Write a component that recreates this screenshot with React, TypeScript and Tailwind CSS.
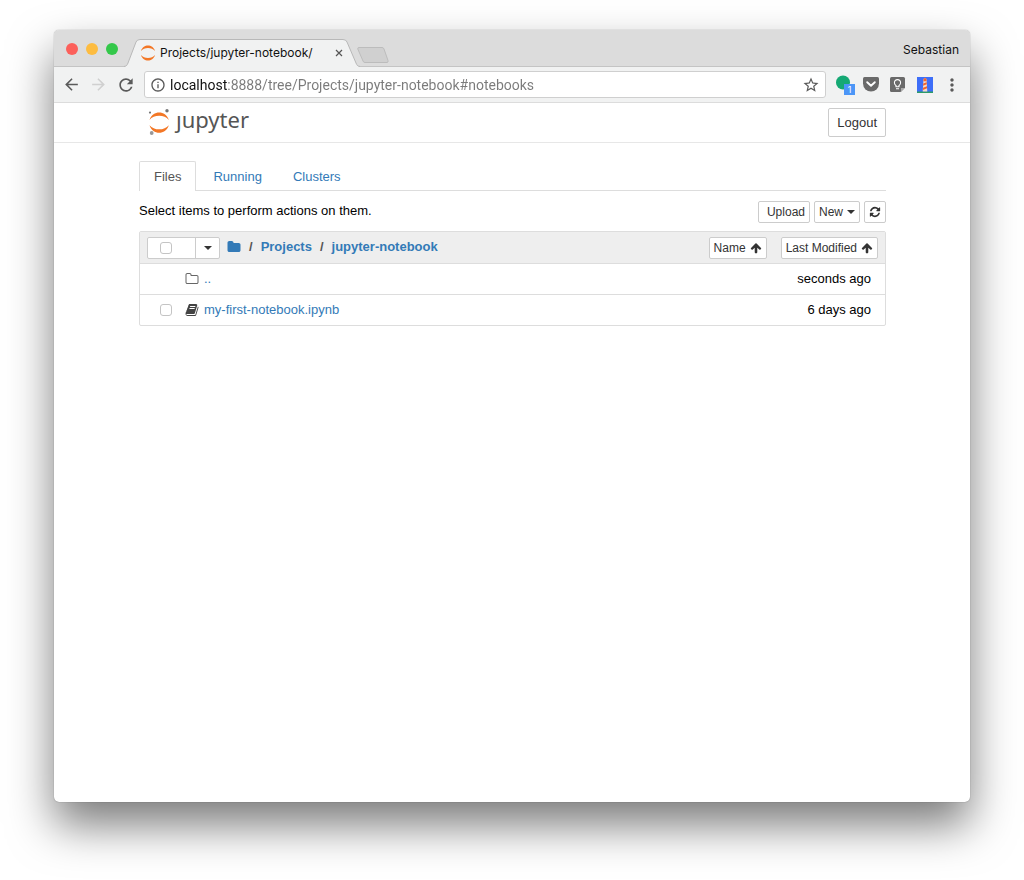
import type { ReactNode } from "react";
import {
  MdArrowBack,
  MdArrowForward,
  MdInfoOutline,
  MdMoreVert,
  MdRefresh,
  MdStarBorder,
} from "react-icons/md";

const glyphs = {
  folder:
    "M1728 608v704q0 92-66 158t-158 66h-1216q-92 0-158-66t-66-158v-960q0-92 66-158t158-66h320q92 0 158 66t66 158v32h672q92 0 158 66t66 158z",
  folderOpen:
    "M1600 1312v-704q0-40-28-68t-68-28h-704q-40 0-68-28t-28-68v-64q0-40-28-68t-68-28h-320q-40 0-68 28t-28 68v960q0 40 28 68t68 28h1216q40 0 68-28t28-68zm128-704v704q0 92-66 158t-158 66h-1216q-92 0-158-66t-66-158v-960q0-92 66-158t158-66h320q92 0 158 66t66 158v32h672q92 0 158 66t66 158z",
  book: "M1703 478q40 57 18 129l-275 906q-19 64-76.5 107.5t-122.5 43.5h-923q-77 0-148.500-53.500t-99.500-131.500q-24-67-2-127 0-4 3-27t4-37q1-8-3-21.500t-3-19.500q2-11 8-21t16.500-23.500 16.500-23.500q23-38 45-91.500t30-91.500q3-10 .5-30t-.5-28q3-11 17-28t17-23q21-36 42-92t25-90q1-9-2.500-32t.5-28q4-13 22-30.500t22-22.500q19-26 42.500-84.500t27.500-96.500q1-8-3-25.500t-2-26.500q2-8 9-18t18-23 17-21q8-12 16.500-30.500t15-35 16-36 19.500-32 26.500-23.500 36-11.500 47.500 5.500l-1 3q38-9 51-9h761q74 0 114 56t18 130l-274 906q-36 119-71.500 153.500t-128.500 34.500h-869q-27 0-38 15-11 16-1 43 24 70 144 70h923q29 0 56-15.500t35-41.500l300-987q7-22 5-57 38 15 59 43zm-1064 2q-4 13 2 22.500t20 9.500h608q13 0 25.500-9.500t16.500-22.500l21-64q4-13-2-22.500t-20-9.500h-608q-13 0-25.500 9.500t-16.500 22.500zm-83 256q-4 13 2 22.500t20 9.500h608q13 0 25.500-9.500t16.500-22.500l21-64q4-13-2-22.500t-20-9.500h-608q-13 0-25.500 9.500t-16.500 22.500z",
  refresh:
    "M1639 1056q0 5-1 7-64 268-268 434.5t-478 166.5q-146 0-282.500-55t-243.500-157l-129 129q-19 19-45 19t-45-19-19-45v-448q0-26 19-45t45-19h448q26 0 45 19t19 45-19 45l-137 137q71 66 161 102t187 36q134 0 250-65t186-179q11-17 53-117 8-23 30-23h192q13 0 22.500 9.500t9.500 22.500zm25-800v448q0 26-19 45t-45 19h-448q-26 0-45-19t-19-45 19-45l138-138q-148-137-349-137-134 0-250 65t-186 179q-11 17-53 117-8 23-30 23h-199q-13 0-22.500-9.500t-9.500-22.500v-7q65-268 270-434.500t480-166.500q146 0 284 55.500t245 156.500l130-129q19-19 45-19t45 19 19 45z",
  arrowUp:
    "M1675 971q0 51-37 90l-75 75q-38 38-91 38-54 0-90-38l-294-293v704q0 52-37.500 84.500t-90.500 32.500h-128q-53 0-90.500-32.500t-37.500-84.500v-704l-294 293q-36 38-90 38t-90-38l-75-75q-38-38-38-90 0-53 38-91l651-651q35-37 90-37 54 0 91 37l651 651q37 39 37 91z",
};

function Glyph({ name, className }: { name: keyof typeof glyphs; className: string }) {
  return (
    <svg viewBox="0 0 1792 1792" fill="currentColor" aria-hidden="true" className={className}>
      <path d={glyphs[name]} />
    </svg>
  );
}

function Caret() {
  return (
    <svg viewBox="0 0 8 4" fill="currentColor" aria-hidden="true" className="h-1 w-2">
      <path d="M0 0h8L4 4z" />
    </svg>
  );
}

function Arcs() {
  return (
    <g fill="#f37726">
      <path d="M1 11C3.200 4.800 7.300 2.500 12 2.500S20.800 4.800 23 11C20.300 7.800 16.500 6.300 12 6.300S3.700 7.800 1 11z" />
      <path d="M1 17C3.200 23.200 7.300 25.500 12 25.500S20.800 23.200 23 17C20.300 20.200 16.500 21.700 12 21.700S3.700 20.200 1 17z" />
    </g>
  );
}

function JupyterLogo() {
  return (
    <a href="#home" aria-label="jupyter" className="flex items-start gap-1 pt-1 text-[#555]">
      <svg viewBox="0 0 24 28" aria-hidden="true" className="h-7 w-6">
        <g transform="translate(.6 3.200) scale(.88)">
          <Arcs />
        </g>
        <circle cx="2" cy="5.600" r="1.100" fill="#767677" />
        <circle cx="19" cy="3.700" r="1.700" fill="#767677" />
        <circle cx="3.700" cy="26" r="1.900" fill="#989798" />
      </svg>
      <span className="font-['Noto_Sans',sans-serif] text-[22px] leading-6">ȷupyter</span>
    </a>
  );
}

function SmallButton({ children, label, className = "px-1" }: { children: ReactNode; label?: string; className?: string }) {
  return (
    <button
      type="button"
      aria-label={label}
      className={`flex h-[22px] items-center justify-center gap-1 rounded-xs border border-[#ccc] bg-white text-xs text-[#333] ${className}`}
    >
      {children}
    </button>
  );
}

function Tick({ label }: { label: string }) {
  return (
    <input
      type="checkbox"
      aria-label={label}
      className="size-3 shrink-0 appearance-none rounded-[3px] border border-[#c4c4c4] bg-white"
    />
  );
}

function BrowserTabs() {
  return (
    <div className="flex h-[37px] items-end border-b border-[#c4c4c4] bg-[#dcdcdc] pl-3">
      <div className="flex gap-2 self-center pt-0.5">
        <button type="button" aria-label="Close window" className="size-3 rounded-full bg-[#fc605b]" />
        <button type="button" aria-label="Minimize window" className="size-3 rounded-full bg-[#fdbc40]" />
        <button type="button" aria-label="Zoom window" className="size-3 rounded-full bg-[#34c84a]" />
      </div>
      <div className="relative -mb-px ml-1.5 flex h-7 w-[236px] items-center pr-[17px] pl-4">
        <svg viewBox="0 0 236 28" preserveAspectRatio="none" aria-hidden="true" className="absolute inset-0 size-full">
          <path d="M0 28C3 27 3 26 4 24L12 3Q13 .500 16 .500H219Q222 .500 223 3L232 24C233 26 233 27 236 28z" fill="#f1f2f2" />
          <path d="M0 27.500C3 27 3 26 4 24L12 3Q13 .500 16 .500H219Q222 .500 223 3L232 24C233 26 233 27 236 27.500" fill="none" stroke="#b8b8b8" />
        </svg>
        <svg viewBox="0 0 24 28" aria-hidden="true" className="relative h-[18px] w-4">
          <Arcs />
        </svg>
        <span className="relative ml-1 flex-1 font-['Inter',sans-serif] text-xs whitespace-nowrap text-[#111]">
          Projects/jupyter-notebook/
        </span>
        <button type="button" aria-label="Close tab" className="relative text-[#555]">
          <svg viewBox="0 0 8 8" aria-hidden="true" className="size-2">
            <path d="M1 1l6 6M7 1L1 7" stroke="currentColor" strokeWidth="1.200" />
          </svg>
        </button>
      </div>
      <button type="button" aria-label="New tab" className="-ml-[3px] mb-[3px]">
        <svg viewBox="0 0 32 16" aria-hidden="true" className="h-4 w-8">
          <path d="M2 .500H25Q26.500 .500 27 2L31 13.500Q31.500 15.500 30 15.500H8Q6.500 15.500 6 14L.800 2Q.500 .500 2 .500z" fill="#d0d0d0" stroke="#bcbcbc" />
        </svg>
      </button>
      <span className="mr-[11px] ml-auto self-center pt-1 font-['Inter',sans-serif] text-xs text-[#111]">Sebastian</span>
    </div>
  );
}

function Extensions() {
  return (
    <div className="ml-2.5 flex items-center gap-2">
      <button type="button" aria-label="Status, 1 new" className="relative size-[19px]">
        <svg viewBox="0 0 19 19" aria-hidden="true" className="size-full">
          <circle cx="7" cy="7.500" r="7" fill="#15a974" />
        </svg>
        <span className="absolute top-[9px] left-2 flex size-[11px] items-center justify-center bg-[#4c96f7] font-['Inter',sans-serif] text-[9px] leading-none text-white">
          1
        </span>
      </button>
      <button type="button" aria-label="Pocket">
        <svg viewBox="0 0 16 15" aria-hidden="true" className="h-[15px] w-4">
          <path d="M1.500 0h13Q16 0 16 1.500V6.500A8 8 0 0 1 0 6.500V1.500Q0 0 1.500 0z" fill="#6a6a6a" />
          <path d="M4.200 5.200L8 8.700l3.800-3.500" fill="none" stroke="#fff" strokeWidth="1.900" strokeLinecap="round" strokeLinejoin="round" />
        </svg>
      </button>
      <button type="button" aria-label="Keep" className="ml-[3px]">
        <svg viewBox="0 0 16 16" aria-hidden="true" className="size-4">
          <path d="M1.500 0h12Q15 0 15 1.500V10.500L10.500 15H1.500Q0 15 0 13.500V1.500Q0 0 1.500 0z" fill="#6a6a6a" />
          <path d="M11 15v-4h4z" fill="#aaa" />
          <path d="M6 9.700V8.400a3.100 3.100 0 1 1 3 0v1.300zM6 11.800h3" fill="none" stroke="#fff" strokeWidth="1.100" />
        </svg>
      </button>
      <button type="button" aria-label="Lighthouse" className="ml-[3px]">
        <svg viewBox="0 0 16 16" aria-hidden="true" className="size-4">
          <path d="M0 0h16v16H0z" fill="#3d6ef8" />
          <path d="M0 14.500h16V16H0z" fill="#2c9c68" />
          <path d="M6.500 2L8 .800 9.500 2l.800 12.500H5.700z" fill="#f4d9c6" />
          <path d="M6.500 2L8 .800 9.500 2v2.200h-3zM6.200 6.500l3.500-1.200.1 2-3.700 1.400zM6 10.700l4-1.500.1 2-4.200 1.800z" fill="#f0642f" />
        </svg>
      </button>
      <button type="button" aria-label="Browser menu" className="ml-px text-[#5a5a5a]">
        <MdMoreVert className="size-5" />
      </button>
    </div>
  );
}

function Toolbar() {
  return (
    <div className="flex h-9 items-center border-b border-[#dcdcdc] bg-[#f1f2f2] px-2 text-[#5a5a5a]">
      <button type="button" aria-label="Back">
        <MdArrowBack className="size-[19px]" />
      </button>
      <button type="button" aria-label="Forward" disabled className="ml-2 text-[#d0d0d0]">
        <MdArrowForward className="size-[19px]" />
      </button>
      <button type="button" aria-label="Reload" className="ml-2">
        <MdRefresh className="size-5" />
      </button>
      <div className="ml-2 flex h-[27px] flex-1 items-center rounded-[3px] border border-[#cfcfcf] bg-white px-[5px]">
        <MdInfoOutline className="size-4 shrink-0" />
        <input
          type="text"
          aria-label="Address"
          defaultValue="localhost:8888/tree/Projects/jupyter-notebook#notebooks"
          className="ml-1 min-w-0 flex-1 bg-[linear-gradient(to_right,#111_57px,#7a7a7a_57px)] bg-clip-text font-['Roboto',sans-serif] text-sm text-transparent caret-black outline-none"
        />
        <button type="button" aria-label="Bookmark this page">
          <MdStarBorder className="size-[18px]" />
        </button>
      </div>
      <Extensions />
    </div>
  );
}

function FileTable() {
  return (
    <div className="mt-2 rounded-xs border border-[#ddd]">
      <table className="w-full border-separate border-spacing-0">
        <thead>
          <tr className="bg-[#eee]">
            <th scope="col" className="h-[31px] p-0 text-left font-bold">
              <div className="flex items-start pl-[7px]">
                <div className="flex h-[22px] rounded-xs border border-[#ccc] bg-white">
                  <label className="flex w-[47px] items-center pl-3">
                    <Tick label="Select all" />
                  </label>
                  <button type="button" aria-label="Selection menu" className="flex w-6 items-center justify-center border-l border-[#ccc] text-[#333]">
                    <Caret />
                  </button>
                </div>
                <nav aria-label="Breadcrumb" className="ml-[7px] flex items-center text-[#337ab7]">
                  <a href="#root" aria-label="Home folder">
                    <Glyph name="folder" className="size-[14px]" />
                  </a>
                  <span className="mx-2 text-[#555]">/</span>
                  <a href="#projects">Projects</a>
                  <span className="mx-2 text-[#555]">/</span>
                  <a href="#notebook">jupyter-notebook</a>
                </nav>
              </div>
            </th>
            <th scope="col" className="p-0 font-normal">
              <div className="flex justify-end gap-[14px] pr-[7px]">
                <SmallButton>
                  Name <Glyph name="arrowUp" className="size-3" />
                </SmallButton>
                <SmallButton>
                  Last Modified <Glyph name="arrowUp" className="size-3" />
                </SmallButton>
              </div>
            </th>
          </tr>
        </thead>
        <tbody>
          <tr>
            <td className="h-[31px] border-t border-[#ddd] p-0 pl-[45px]">
              <a href="#up" className="flex items-center gap-[5px] text-[#337ab7]">
                <Glyph name="folderOpen" className="size-[14px] text-[#666]" />
                <span>..</span>
              </a>
            </td>
            <td className="border-t border-[#ddd] p-0 pr-[14px] text-right">seconds ago</td>
          </tr>
          <tr>
            <td className="h-[31px] border-t border-[#ddd] p-0 pl-5">
              <div className="flex items-center">
                <Tick label="Select my-first-notebook.ipynb" />
                <a href="#my-first-notebook" className="ml-[13px] flex items-center gap-[5px] text-[#337ab7]">
                  <Glyph name="book" className="size-[14px] text-[#444]" />
                  <span>my-first-notebook.ipynb</span>
                </a>
              </div>
            </td>
            <td className="border-t border-[#ddd] p-0 pr-[14px] text-right">6 days ago</td>
          </tr>
        </tbody>
      </table>
    </div>
  );
}

export default function App() {
  return (
    <div className="flex min-h-screen bg-white px-[54px] pt-[30px] pb-[78px] font-['Liberation_Sans',Arial,sans-serif] text-[13px] leading-5 text-black">
      <div className="flex-1 overflow-hidden rounded-[5px] bg-white shadow-[0_0_1px_rgba(0,0,0,0.5),0_23px_45px_rgba(0,0,0,0.52)]">
        <BrowserTabs />
        <Toolbar />
        <header className="flex h-10 items-start justify-between border-b border-[#e7e7e7] pr-[84px] pl-[94px]">
          <JupyterLogo />
          <button type="button" className="mt-[5px] h-[29px] rounded-xs border border-[#ccc] bg-white px-2 text-[#333]">
            Logout
          </button>
        </header>
        <main className="pt-[18px] pr-[84px] pl-[85px]">
          <nav aria-label="Sections" className="flex h-[30px] border-b border-[#ddd]">
            <a href="#files" className="-mb-px rounded-t-xs border border-b-0 border-[#ddd] bg-white px-[14px] pt-[5px] text-[#555]">
              Files
            </a>
            <a href="#running" className="ml-[3px] px-[14px] pt-1.5 text-[#337ab7]">
              Running
            </a>
            <a href="#clusters" className="ml-[3px] px-[14px] pt-1.5 text-[#337ab7]">
              Clusters
            </a>
          </nav>
          <div className="mt-2.5 flex items-start justify-between">
            <p>Select items to perform actions on them.</p>
            <div className="flex gap-1">
              <SmallButton className="pr-1 pl-2">Upload</SmallButton>
              <SmallButton>
                New <Caret />
              </SmallButton>
              <SmallButton label="Refresh list">
                <Glyph name="refresh" className="size-3" />
              </SmallButton>
            </div>
          </div>
          <FileTable />
        </main>
      </div>
    </div>
  );
}
